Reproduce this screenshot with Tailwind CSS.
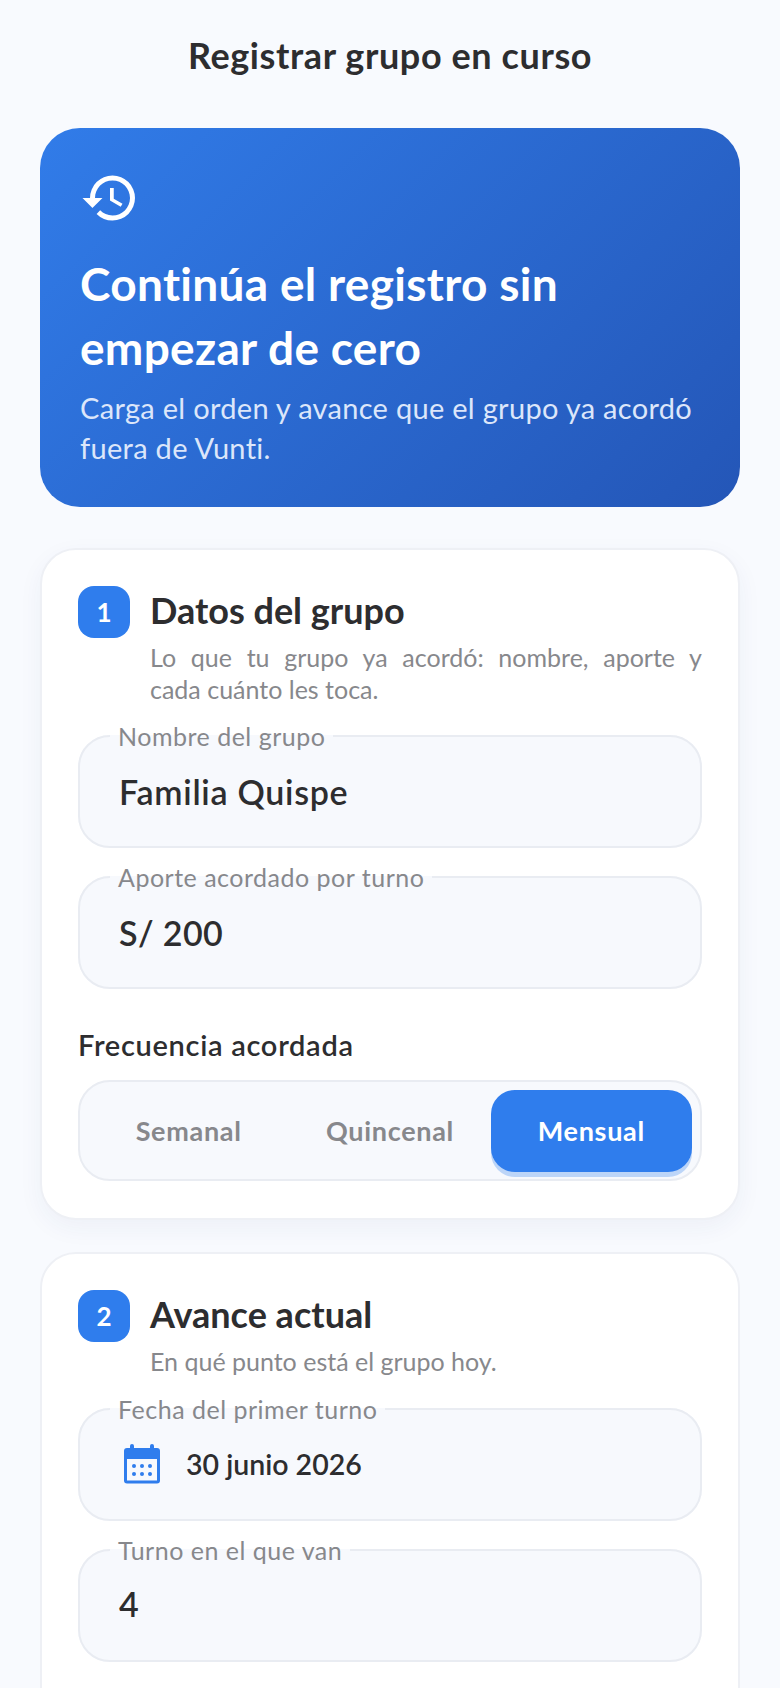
<!DOCTYPE html>
<html lang="es">
  <head>
    <meta charset="UTF-8" />
    <meta name="viewport" content="width=device-width, initial-scale=1.0" />
    <script src="https://cdn.jsdelivr.net/npm/@tailwindcss/browser@4"></script>
    <title>Registrar grupo en curso</title>
  </head>

  <body class="h-[1688px] overflow-hidden bg-[#f8fafe] px-10 font-['Lato',sans-serif] text-[#2d2d2f]">
    <header class="flex h-[128px] items-start justify-center pt-[31px]">
      <h1 class="text-[36px] leading-[48px] font-bold tracking-[0.6px]">Registrar grupo en curso</h1>
    </header>

    <section class="h-[379px] rounded-[40px] bg-linear-135 from-[#317ce9] to-[#2456b7] px-10 pt-10 text-white">
      <svg class="h-[60px] w-[60px]" viewBox="0 0 24 24" fill="currentColor">
        <path d="M13 3a9 9 0 0 0-9 9H1l3.89 3.89.07.14L9 12H6c0-3.87 3.13-7 7-7s7 3.13 7 7-3.13 7-7 7c-1.93 0-3.68-.79-4.94-2.06l-1.42 1.42A8.954 8.954 0 0 0 13 21a9 9 0 0 0 0-18zm-1 5v5l4.28 2.54.72-1.21-3.5-2.08V8H12z" />
      </svg>
      <h2 class="mt-[24px] text-[46px] leading-[64px] font-bold tracking-[0.3px]">Continúa el registro sin empezar de cero</h2>
      <p class="mt-[8px] text-[29px] leading-[40px] tracking-[0.3px] text-[#dce6fa]">Carga el orden y avance que el grupo ya acordó fuera de Vunti.</p>
    </section>

    <section class="mt-[41px] h-[672px] rounded-[36px] border-2 border-[#eef0f5] bg-white px-[36px] pt-[35px] shadow-[0_8px_24px_rgba(40,60,110,0.05)]">
      <div class="flex gap-[20px]">
        <span class="mt-px flex h-[52px] w-[52px] shrink-0 items-center justify-center rounded-2xl bg-[#2f7ded] text-[26px] font-bold text-white">1</span>
        <div>
          <h3 class="text-[36px] leading-[50px] font-bold">Datos del grupo</h3>
          <p class="mt-[6px] text-justify text-[25px] leading-[32px] text-[#87888c]">Lo que tu grupo ya acordó: nombre, aporte y cada&nbsp;cuánto les toca.</p>
        </div>
      </div>

      <fieldset class="mt-[17px] h-[126px] rounded-[32px] border-2 border-[#e9ecf2] bg-[#f7f9fd] px-[32px]">
        <legend class="-ml-[2px] px-2 text-[25px] leading-[28px] tracking-[0.5px] text-[#87888c]">Nombre del grupo</legend>
        <div class="pt-[20px] pl-[7px] text-[34px] leading-[44px] font-semibold tracking-[0.7px]">Familia Quispe</div>
      </fieldset>

      <fieldset class="mt-[15px] h-[126px] rounded-[32px] border-2 border-[#e9ecf2] bg-[#f7f9fd] px-[32px]">
        <legend class="-ml-[2px] px-2 text-[25px] leading-[28px] tracking-[0.5px] text-[#87888c]">Aporte acordado por turno</legend>
        <div class="pt-[20px] pl-[7px] text-[34px] leading-[44px] font-semibold tracking-[0.4px]">S/ 200</div>
      </fieldset>

      <p class="mt-[36px] text-[29px] leading-[40px] font-semibold tracking-[0.7px]">Frecuencia acordada</p>

      <div class="mt-[15px] grid h-[101px] grid-cols-3 rounded-[32px] border-2 border-[#e9ecf2] bg-[#f7f9fd] px-2 pt-2 text-[27px] font-bold tracking-[0.7px] text-[#87888c]">
        <button class="h-[82px]">Semanal</button>
        <button class="h-[82px]">Quincenal</button>
        <button class="h-[82px] rounded-3xl bg-[#2f7ded] text-white shadow-[0_5px_0_#bcd5f8]">Mensual</button>
      </div>
    </section>

    <section class="mt-[32px] h-[500px] rounded-[36px] border-2 border-[#eef0f5] bg-white px-[36px] pt-[35px]">
      <div class="flex gap-[20px]">
        <span class="mt-px flex h-[52px] w-[52px] shrink-0 items-center justify-center rounded-2xl bg-[#2f7ded] text-[26px] font-bold text-white">2</span>
        <div>
          <h3 class="text-[36px] leading-[50px] font-bold">Avance actual</h3>
          <p class="mt-[6px] text-[25px] leading-[32px] text-[#87888c]">En qué punto está el grupo hoy.</p>
        </div>
      </div>

      <fieldset class="mt-[18px] h-[126px] rounded-[32px] border-2 border-[#e9ecf2] bg-[#f7f9fd] px-[32px]">
        <legend class="-ml-[2px] px-2 text-[25px] leading-[28px] tracking-[0.5px] text-[#87888c]">Fecha del primer turno</legend>
        <div class="flex items-center gap-[26px] pt-[19px] pl-[12px]">
          <svg class="h-[40px] w-[36px]" viewBox="0 0 36 40" fill="#2f7ded">
            <rect x="6" y="0" width="4" height="8" rx="2" />
            <rect x="26" y="0" width="4" height="8" rx="2" />
            <rect x="0" y="4" width="36" height="35.5" rx="3" />
            <rect x="3" y="15" width="30" height="21.5" fill="#f7f9fd" />
            <circle cx="10" cy="22" r="2" /><circle cx="18" cy="22" r="2" /><circle cx="26" cy="22" r="2" />
            <circle cx="10" cy="30" r="2" /><circle cx="18" cy="30" r="2" /><circle cx="26" cy="30" r="2" />
          </svg>
          <span class="text-[28.5px] leading-[44px] font-semibold">30 junio 2026</span>
        </div>
      </fieldset>

      <fieldset class="mt-[15px] h-[126px] rounded-[32px] border-2 border-[#e9ecf2] bg-[#f7f9fd] px-[32px]">
        <legend class="-ml-[2px] px-2 text-[25px] leading-[28px] tracking-[0.5px] text-[#87888c]">Turno en el que van</legend>
        <div class="pt-[18px] pl-[7px] text-[34px] leading-[44px] font-semibold">4</div>
      </fieldset>
    </section>
  </body>
</html>
